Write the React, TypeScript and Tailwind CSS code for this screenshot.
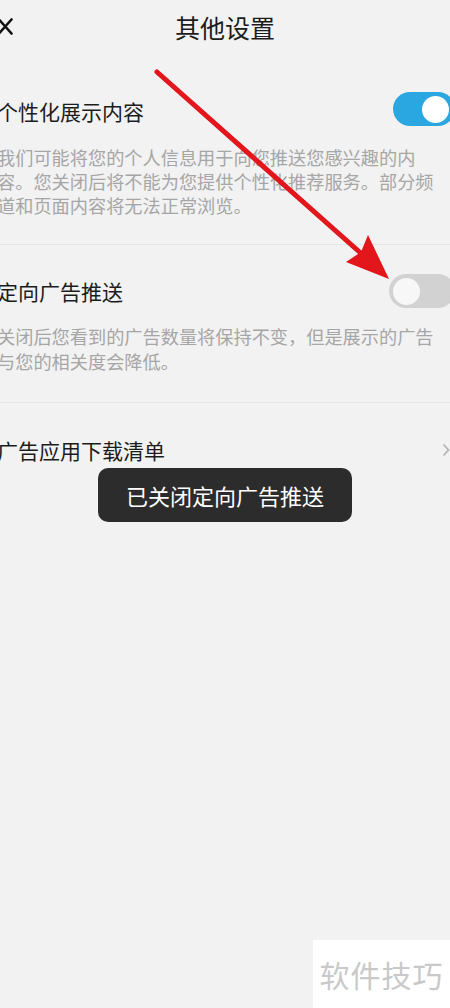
import React from 'react';

const Toggle = ({ on }: { on: boolean }) =>
    on ? (
        <div className="w-[62px] h-[34px] rounded-full bg-[#2aa6e0] flex items-center justify-end pr-[6px] shrink-0">
            <div className="w-[27px] h-[27px] rounded-full bg-white" />
        </div>
    ) : (
        <div className="w-[66px] h-[34px] rounded-full bg-[#d2d2d2] flex items-center pl-[4px] shrink-0">
            <div className="w-[27px] h-[27px] rounded-full bg-[#f7f7f7]" />
        </div>
    );

const App: React.FC = () => {
    return (
        <div
            className="relative w-[450px] h-[1008px] overflow-hidden bg-[#f2f2f2] text-[#1c1c1c]"
            style={{ fontFamily: '"Noto Sans CJK SC", "Noto Sans", sans-serif' }}
        >
            {/* header */}
            <div className="relative h-[55px] flex items-center justify-center">
                <svg className="absolute left-[-2px] top-[18px]" width="15" height="17" viewBox="0 0 15 17">
                    <path d="M1 1.5 L13.5 15.5 M13.5 1.5 L1 15.5" stroke="#111" strokeWidth="2.6" strokeLinecap="round" />
                </svg>
                <div className="text-[25px] leading-none">其他设置</div>
            </div>

            <div className="ml-[-3px] w-[458px]">
                {/* 个性化展示内容 */}
                <div className="pt-[37px] pb-[27px] border-b border-[#e6e6e6]">
                    <div className="h-[34px] flex items-center justify-between">
                        <span className="text-[21px] leading-none mt-[5px]">个性化展示内容</span>
                        <Toggle on />
                    </div>
                    <p className="mt-[19px] text-[18.2px] leading-[24px] text-[#a6a6a6] pr-[14px]">
                        我们可能将您的个人信息用于向您推送您感兴趣的内容。您关闭后将不能为您提供个性化推荐服务。部分频道和页面内容将无法正常浏览。
                    </p>
                </div>

                {/* 定向广告推送 */}
                <div className="pt-[29px] pb-[28px] border-b border-[#e6e6e6]">
                    <div className="h-[34px] flex items-center justify-between">
                        <span className="text-[21px] leading-none">定向广告推送</span>
                        <Toggle on={false} />
                    </div>
                    <p className="mt-[16px] text-[18.2px] leading-[25px] text-[#a6a6a6] pr-[14px]">
                        关闭后您看到的广告数量将保持不变，但是展示的广告与您的相关度会降低。
                    </p>
                </div>

                {/* 广告应用下载清单 */}
                <div className="pt-[30px]">
                    <div className="h-[34px] flex items-center justify-between">
                        <span className="text-[21px] leading-none">广告应用下载清单</span>
                        <svg className="mr-[5px]" width="8" height="14" viewBox="0 0 8 14">
                            <path d="M1.5 1.5 L6.5 7 L1.5 12.5" stroke="#b0b0b0" strokeWidth="1.6" fill="none" />
                        </svg>
                    </div>
                </div>
            </div>

            {/* toast */}
            <div className="absolute left-[98px] top-[468px] w-[254px] h-[54px] rounded-[10px] bg-[#2c2c2c] flex items-center justify-center">
                <span className="text-white text-[22px] leading-none">已关闭定向广告推送</span>
            </div>

            {/* red arrow annotation */}
            <svg className="absolute left-0 top-0 pointer-events-none" width="450" height="400" viewBox="0 0 450 400">
                <defs>
                    <filter id="blur" x="-10%" y="-10%" width="120%" height="120%">
                        <feGaussianBlur stdDeviation="0.7" />
                    </filter>
                </defs>
                <g filter="url(#blur)">
                    <path d="M157 72 L364 256" stroke="#e3121a" strokeWidth="5" strokeLinecap="round" />
                    <path d="M389 279 L346 262 L361 252 L368 235 Z" fill="#e3121a" />
                </g>
            </svg>

            {/* watermark */}
            <div className="absolute left-[313px] top-[940px] w-[137px] h-[68px] bg-white flex items-center justify-center">
                <span className="text-[30px] text-[#c9c9c9] leading-none tracking-[1px]">软件技巧</span>
            </div>
        </div>
    );
};

export default App;
